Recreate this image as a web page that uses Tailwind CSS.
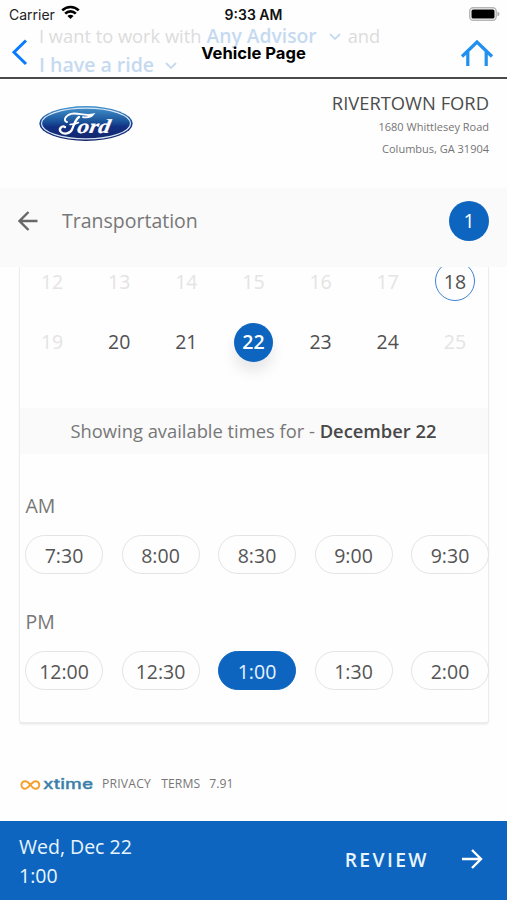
<!DOCTYPE html>
<html lang="en">
<head>
<meta charset="utf-8">
<title>Vehicle Page</title>
<script src="https://cdn.jsdelivr.net/npm/@tailwindcss/browser@4"></script>
</head>
<body class="bg-white">
<main class="relative flex h-[900px] w-[507px] flex-col overflow-hidden bg-[#fefefe] font-['Open_Sans',sans-serif] text-[#555]">
  <header class="relative h-[79px] shrink-0 border-b-2 border-[#4a4a4a]">
    <!-- page content showing faintly through the navigation bar -->
    <div class="absolute left-[39px] top-[21px] text-[18.3px] leading-[29px] whitespace-nowrap text-[#dcdcdc]">
      <div class="flex items-center"><span>I want to work with</span><b class="ml-[5px] text-[19.3px] font-semibold text-[#c5daf1]">Any Advisor</b>
        <svg class="ml-[11px] mr-[6px] mt-[3px]" width="14" height="10" fill="none" stroke="#c5daf1" stroke-width="1.8"><path d="M2 2l5 5 5-5"/></svg><span>and</span></div>
      <div class="flex items-center text-[19.5px]"><b class="font-semibold text-[#c5daf1]">I have a ride</b>
        <svg class="ml-[10px] mt-[3px]" width="14" height="10" fill="none" stroke="#c5daf1" stroke-width="1.8"><path d="M2 2l5 5 5-5"/></svg></div>
    </div>
    <div class="relative grid h-[28px] grid-cols-3 items-center px-[9px] font-['Inter',sans-serif]">
      <div class="flex items-center gap-[6px] text-[14px] text-[#222]"><span>Carrier</span>
        <svg class="-mt-[3px]" width="19" height="15" viewBox="0 0 20 15" fill="none" stroke="#000" stroke-width="2.8"><path d="M1.3 5.3a12.3 12.3 0 0 1 17.4 0M4.4 8.7a7.900 7.900 0 0 1 11.2 0"/><path d="M10 14.3l-3.2-3.2a4.5 4.5 0 0 1 6.4 0z" fill="#000" stroke="none"/></svg></div>
      <div class="text-center text-[14px] font-semibold text-[#111]">9:33 AM</div>
      <svg class="-mr-[2px] justify-self-end" width="31" height="14" viewBox="0 0 31 14"><rect x=".7" y=".7" width="26.5" height="12.6" rx="3.5" fill="#fff" stroke="#b5b5b5" stroke-width="1.4"/><rect x="2.5" y="2.5" width="23" height="9" rx="1.6"/><path d="M28.5 4.7q2 .6 2 2.3t-2 2.3z" fill="#aaa"/></svg>
    </div>
    <div class="relative flex h-[49px] items-center justify-between pl-[10px] pr-[13px]">
      <svg class="-mt-[2px]" width="18" height="28" viewBox="0 0 18 28" fill="none" stroke="#087bff" stroke-width="3"><path d="M16 2.500L4 14.3 16 26"/></svg>
      <h1 class="absolute inset-x-0 top-[13px] text-center font-['Inter',sans-serif] text-[16.6px] leading-[24px] font-bold text-black">Vehicle Page</h1>
      <svg width="34" height="28" viewBox="0 0 34 28" fill="none" stroke="#2190ee" stroke-width="3.2"><path d="M2 17.500L17 3l15 14.500M7.800 12.500V27M26.200 12.500V27"/></svg>
    </div>
  </header>

  <section class="flex h-[109px] shrink-0 items-start justify-between pl-[39px] pr-[18px]">
    <svg class="mt-[26px]" width="94" height="37" viewBox="0 0 94 37" role="img" aria-label="Ford">
      <defs><linearGradient id="oval" x1="0" y1="0" x2="0" y2="1"><stop offset="0" stop-color="#4596cf"/><stop offset=".45" stop-color="#1a5299"/><stop offset=".6" stop-color="#123083"/><stop offset="1" stop-color="#122569"/></linearGradient></defs>
      <ellipse cx="47" cy="18.500" rx="46.700" ry="17.400" fill="url(#oval)"/>
      <ellipse cx="47" cy="18.500" rx="44.500" ry="15.400" fill="none" stroke="#d7e5f3" stroke-width="1.2"/>
      <text transform="translate(37.500 27.500) skewX(-10)" font-size="20" textLength="33" lengthAdjust="spacingAndGlyphs" fill="#fff" stroke="#fff" stroke-width=".2" font-family="Liberation Serif, serif" font-style="italic" font-weight="bold">ord</text>
      <!-- emblem flourish -->
      <g fill="none" stroke="#fff" stroke-linecap="round">
        <path d="M28 17c-4-1-2-6.500 4-8.200 7-1.800 13 2.800 22 .7-2 2.600-6 3.200-10 2.600" stroke-width="1.900"/>
        <path d="M40 12c-4 3-5 8-7 12.500-2.200 4.300-8 5.200-11 2.500-3-3 1-7 4-5" stroke-width="2.300"/>
        <path d="M31 19.500c3-.2 6-.6 8.500-2" stroke-width="1.500"/>
      </g>
    </svg>
    <div class="pt-[11px] text-right">
      <div class="text-[18.350px] leading-[26px] text-[#4c4c4c]">RIVERTOWN FORD</div>
      <div class="text-[11px] leading-[22px] text-[#757575]">1680 Whittlesey Road<br>Columbus, GA 31904</div>
    </div>
  </section>

  <section class="flex h-[79px] shrink-0 items-center bg-[#fafafa] pl-[18px] pr-[18px] pb-[13px]">
    <svg width="20" height="20" viewBox="0 0 20 20" fill="none" stroke="#686868" stroke-width="2.400"><path d="M19.500 10H2M10.500 1L1.500 10l9 9"/></svg>
    <h2 class="ml-[24px] flex-1 text-[19.5px] text-[#777]">Transportation</h2>
    <span class="flex size-[40px] items-center justify-center rounded-full bg-[#0e65c0] text-[19.5px] text-white">1</span>
  </section>

  <section class="mx-[18.5px] h-[457px] shrink-0 rounded-b-[4px] border-x border-b-2 border-[#ececec] bg-[#fefefe] shadow-[0_1px_2px_rgba(0,0,0,0.06)]">
    <div class="h-[141px] overflow-hidden">
      <div class="-mx-px -mt-[16px] grid grid-cols-7 place-items-center text-[19.5px] text-[#e4e4e4]">
        <span class="flex h-[61px] items-center">12</span><span>13</span><span>14</span><span>15</span><span>16</span><span>17</span>
        <span class="mt-[-2px] flex size-[40px] items-center justify-center rounded-full border-[1.5px] border-[#3b83d3] pt-[2px] text-[#505050]">18</span>
        <span class="flex h-[60px] items-center">19</span><span class="text-[#505050]">20</span><span class="text-[#505050]">21</span>
        <span class="flex size-[39px] items-center justify-center rounded-full bg-[#0e65c0] font-semibold text-white shadow-[0_10px_14px_rgba(0,0,0,0.09)]">22</span>
        <span class="text-[#505050]">23</span><span class="text-[#505050]">24</span><span>25</span>
      </div>
    </div>
    <div class="flex h-[46px] items-center justify-center bg-[#fafafa] text-[18.350px] whitespace-pre text-[#777]"><span>Showing available times for - <b class="font-semibold text-[#484848]">December 22</b></span></div>
    <div class="ml-[6px] mt-[38px] text-[19.5px] leading-[28px] text-[#777]">AM</div>
    <div class="ml-[5.500px] mt-[15px] flex w-[464px] justify-between text-[19.5px]">
      <span class="flex h-[39px] w-[78px] items-center justify-center rounded-full border border-[#e4e4e4] pt-[2px]">7:30</span>
      <span class="flex h-[39px] w-[78px] items-center justify-center rounded-full border border-[#e4e4e4] pt-[2px]">8:00</span>
      <span class="flex h-[39px] w-[78px] items-center justify-center rounded-full border border-[#e4e4e4] pt-[2px]">8:30</span>
      <span class="flex h-[39px] w-[78px] items-center justify-center rounded-full border border-[#e4e4e4] pt-[2px]">9:00</span>
      <span class="flex h-[39px] w-[78px] items-center justify-center rounded-full border border-[#e4e4e4] pt-[2px]">9:30</span>
    </div>
    <div class="ml-[6px] mt-[34px] text-[19.5px] leading-[28px] text-[#777]">PM</div>
    <div class="ml-[5.500px] mt-[15px] flex w-[464px] justify-between text-[19.5px]">
      <span class="flex h-[39px] w-[78px] items-center justify-center rounded-full border border-[#e4e4e4] pt-[2px]">12:00</span>
      <span class="flex h-[39px] w-[78px] items-center justify-center rounded-full border border-[#e4e4e4] pt-[2px]">12:30</span>
      <span class="flex h-[39px] w-[78px] items-center justify-center rounded-full border border-[#0e65c0] bg-[#0e65c0] pt-[2px] text-[#e5f3ff]">1:00</span>
      <span class="flex h-[39px] w-[78px] items-center justify-center rounded-full border border-[#e4e4e4] pt-[2px]">1:30</span>
      <span class="flex h-[39px] w-[78px] items-center justify-center rounded-full border border-[#e4e4e4] pt-[2px]">2:00</span>
    </div>
  </section>

  <footer class="flex h-[97px] shrink-0 items-start pl-[19px] pt-[49px] text-[12.200px] leading-[21px] font-medium text-[#777]">
    <svg class="mt-[2px] mr-[6px]" width="77" height="20" viewBox="0 0 77 20" role="img" aria-label="xtime">
      <path d="M11.500 10C9 7 8 6.200 6.200 6.200a3.800 3.800 0 0 0 0 7.600C9 13.800 13 6.200 16.500 6.200a3.800 3.800 0 0 1 0 7.600C14.500 13.800 13 12 11.500 10z" fill="none" stroke="#f5a02c" stroke-width="2"/>
      <text x="24" y="14" font-family="Inter, sans-serif" font-size="14" font-weight="500" fill="#3c7fa9" stroke="#3c7fa9" stroke-width=".3" textLength="50" lengthAdjust="spacingAndGlyphs">xtime</text>
    </svg>
    <span class="tracking-[0.2px]">PRIVACY</span><span class="ml-[10px] tracking-[0.1px]">TERMS</span><span class="ml-[9px]">7.91</span>
  </footer>

  <section class="flex h-[79px] shrink-0 items-center bg-[#0e65c0] pl-[19px] pr-[24px] text-[#e8f5ff]">
    <div class="flex-1 text-[19.5px] leading-[29px]">Wed, Dec 22<br>1:00</div>
    <div class="text-[19.3px] font-semibold tracking-[2.400px]">REVIEW</div>
    <svg class="ml-[33px] mb-[3px]" width="21" height="20" viewBox="0 0 21 20" fill="none" stroke="#fff" stroke-width="2.400"><path d="M0 10h19M10 1l9 9-9 9"/></svg>
  </section>
</main>
</body>
</html>
